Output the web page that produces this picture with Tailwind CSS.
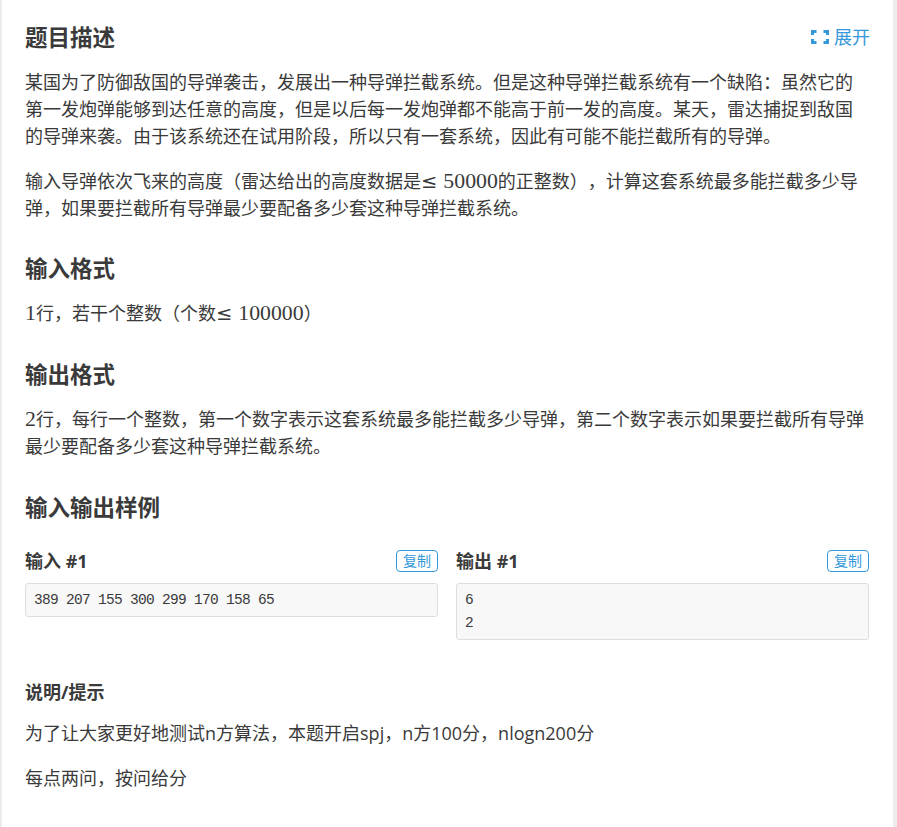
<!DOCTYPE html>
<html lang="zh-CN">
<head>
    <meta charset="UTF-8">
    <title>题目描述</title>
    <script src="https://cdn.jsdelivr.net/npm/@tailwindcss/browser@4"></script>
</head>
<body class="bg-[#ececec] font-['Open_Sans','Noto_Sans_CJK_SC',sans-serif] text-[#3a3a3a]">
    <div class="ml-[2px] w-[891px] h-[827px] overflow-hidden bg-white pl-[23px] pr-[24px] pt-[20px] text-[18px] leading-[27px] [text-spacing-trim:space-all]">
        <div class="flex items-center justify-between h-[34px]">
            <h2 class="text-[22.5px] font-bold">题目描述</h2>
            <a class="flex items-center text-[#3498db] mr-[-1px]">
                <svg class="w-[18px] h-[14px] mr-[5px]" viewBox="0 0 18 14" fill="none" stroke="#3498db" stroke-width="3"><path d="M1.5 5V1.5H5.5M12.5 1.5H16.5V5M16.5 9V12.5H12.5M5.5 12.5H1.5V9"/></svg>
                展开
            </a>
        </div>
        <p class="mt-[15px]">某国为了防御敌国的导弹袭击，发展出一种导弹拦截系统。但是这种导弹拦截系统有一个缺陷：虽然它的第一发炮弹能够到达任意的高度，但是以后每一发炮弹都不能高于前一发的高度。某天，雷达捕捉到敌国的导弹来袭。由于该系统还在试用阶段，所以只有一套系统，因此有可能不能拦截所有的导弹。</p>
        <p class="mt-[18px]">输入导弹依次飞来的高度（雷达给出的高度数据是<span class="font-['DejaVu_Sans',sans-serif] text-[19.5px] leading-none mr-[6px]">≤</span><span class="font-['Liberation_Serif',serif] text-[21.8px] leading-none">50000</span>的正整数），计算这套系统最多能拦截多少导弹，如果要拦截所有导弹最少要配备多少套这种导弹拦截系统。</p>
        <h2 class="mt-[30px] text-[22.5px] font-bold leading-[34px]">输入格式</h2>
        <p class="mt-[14px]"><span class="font-['Liberation_Serif',serif] text-[21.8px] leading-none">1</span>行，若干个整数（个数<span class="font-['DejaVu_Sans',sans-serif] text-[19.5px] leading-none mr-[6px]">≤</span><span class="font-['Liberation_Serif',serif] text-[21.8px] leading-none">100000</span>）</p>
        <h2 class="mt-[31px] text-[22.5px] font-bold leading-[34px]">输出格式</h2>
        <p class="mt-[14px]"><span class="font-['Liberation_Serif',serif] text-[21.8px] leading-none">2</span>行，每行一个整数，第一个数字表示这套系统最多能拦截多少导弹，第二个数字表示如果要拦截所有导弹最少要配备多少套这种导弹拦截系统。</p>
        <h2 class="mt-[31px] text-[22.5px] font-bold leading-[34px]">输入输出样例</h2>
        <div class="mt-[24px] grid grid-cols-2 gap-[18px] items-start">
            <div>
                <div class="flex items-center justify-between h-[24px]">
                    <h3 class="font-bold">输入 #1</h3>
                    <span class="border border-[#3498db] rounded-[4px] text-[#3498db] text-[14px] leading-[20px] px-[6px]">复制</span>
                </div>
                <pre class="mt-[10px] border border-[#ddd] rounded-[3px] bg-[#f8f8f8] px-[8px] py-[4.5px] font-['Liberation_Mono',monospace] text-[14.5px] tracking-[-0.7px] leading-[23px]">389 207 155 300 299 170 158 65</pre>
            </div>
            <div>
                <div class="flex items-center justify-between h-[24px]">
                    <h3 class="font-bold">输出 #1</h3>
                    <span class="border border-[#3498db] rounded-[4px] text-[#3498db] text-[14px] leading-[20px] px-[6px]">复制</span>
                </div>
                <pre class="mt-[10px] border border-[#ddd] rounded-[3px] bg-[#f8f8f8] px-[8px] py-[4.5px] font-['Liberation_Mono',monospace] text-[14.5px] tracking-[-0.7px] leading-[23px]">6
2</pre>
            </div>
        </div>
        <h3 class="mt-[37px] font-bold leading-[30px]">说明/提示</h3>
        <p class="mt-[13px]">为了让大家更好地测试n方算法，本题开启spj，n方100分，nlogn200分</p>
        <p class="mt-[18px]">每点两问，按问给分</p>
    </div>
</body>
</html>
